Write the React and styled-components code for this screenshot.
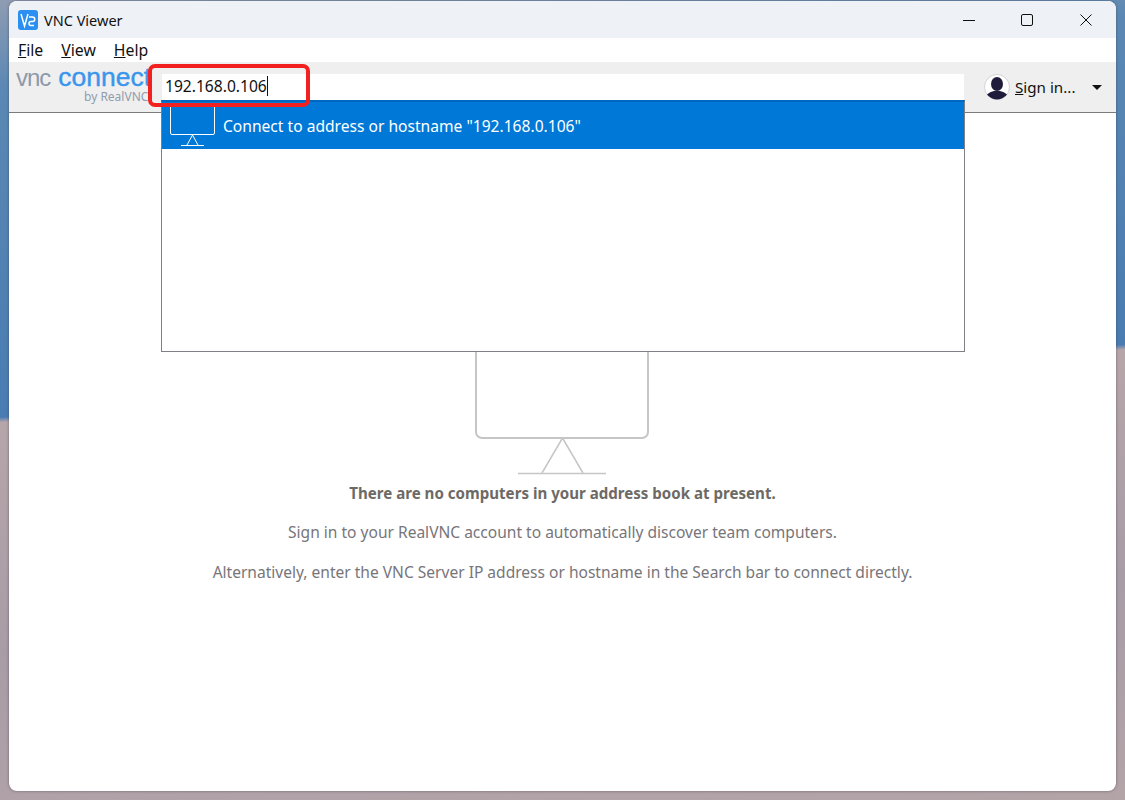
import React from 'react';
import styled, { createGlobalStyle } from 'styled-components';

const GlobalStyle = createGlobalStyle`
  html, body {
    margin: 0;
    height: 800px;
    overflow: hidden;
  }
  body {
    font-family: "Noto Sans", "Open Sans", sans-serif;
    background:
      linear-gradient(176.3deg, #8f9cb2 0%, #5b88b4 10%, #4a7cb2 47.8%, #b6a6aa 48.4%, #a89ca6 75%, #b3a4a8 100%);
  }
`;

const Desktop = styled.div`
  padding: 1px 9px 9px 9px;
  height: 800px;
  box-sizing: border-box;
`;

const Window = styled.div`
  width: 1107px;
  height: 790px;
  display: flex;
  flex-direction: column;
  background: #fff;
  border-radius: 8px;
  overflow: hidden;
  box-shadow: 0 0 3px rgba(50, 50, 60, 0.55);
`;

const TitleBar = styled.div`
  height: 37px;
  flex: none;
  display: flex;
  align-items: center;
  padding: 0 1px 0 9px;
  background: #eef2f7;
`;

const AppIcon = styled.svg`
  width: 20px;
  height: 20px;
  flex: none;
`;

const Title = styled.span`
  margin-left: 6px;
  font-size: 14.5px;
  color: #111;
  flex: 1;
`;

const WinButton = styled.div`
  width: 58px;
  height: 37px;
  display: flex;
  align-items: center;
  justify-content: center;

  &:last-child {
    margin-left: 1px;
  }
`;

const MenuBar = styled.div`
  height: 24px;
  flex: none;
  display: flex;
  align-items: center;
  gap: 18px;
  padding-left: 9px;
  background: #fff;
`;

const MenuItem = styled.span`
  font-size: 15.8px;
  color: #111;
`;

const Toolbar = styled.div`
  position: relative;
  height: 50px;
  flex: none;
  display: flex;
  align-items: flex-start;
  background: #efefef;
  border-bottom: 1px solid #7b7b7b;
`;

const Logo = styled.div`
  width: 132px;
  margin-left: 7px;
  margin-top: 3px;
  flex: none;
  display: flex;
  flex-direction: column;
`;

const LogoMark = styled.div`
  display: flex;
  align-items: baseline;
  font-family: "Liberation Sans", Arial, sans-serif;
  line-height: 25px;
  white-space: nowrap;
`;

const LogoVnc = styled.span`
  margin-right: 8px;
  font-size: 24px;
  letter-spacing: -1px;
  color: #8d99aa;
`;

const LogoConnect = styled.span`
  font-size: 26.5px;
  color: #3a96ec;
  -webkit-text-stroke: 0.4px #3a96ec;
`;

const LogoBy = styled.div`
  font-size: 12px;
  line-height: 14px;
  color: #8f9cae;
  padding-left: 68px;
  white-space: nowrap;
`;

const SearchInput = styled.div`
  width: 799px;
  height: 24px;
  margin: 12px 0 0 14px;
  padding: 0 0 2px 3px;
  flex: none;
  display: flex;
  align-items: center;
  background: #fff;
  font-size: 15.6px;
  color: #111;
`;

const Caret = styled.span`
  display: inline-block;
  width: 1px;
  height: 20px;
  background: #111;
`;

const Account = styled.div`
  margin: 11px 0 0 20px;
  display: flex;
  align-items: center;
  height: 27px;
`;

const SignIn = styled.span`
  margin-left: 5px;
  font-size: 15.2px;
  color: #111;
`;

const Arrow = styled.span`
  margin: 1px 0 0 17px;
  width: 0;
  height: 0;
  border-left: 5px solid transparent;
  border-right: 5px solid transparent;
  border-top: 5px solid #111;
`;

const Popup = styled.div`
  position: absolute;
  z-index: 2;
  left: 152px;
  top: 38px;
  width: 804px;
  height: 252px;
  box-sizing: border-box;
  background: #fff;
  border: 1px solid #7f7f86;
  border-top: 2px solid #0067c0;
`;

const PopupRow = styled.div`
  height: 47px;
  display: flex;
  align-items: center;
  padding-left: 8px;
  background: #0078d7;
  color: #fff;
  font-size: 15.6px;
`;

const RowText = styled.span`
  margin-left: 8px;
`;

const Annotation = styled.div`
  position: absolute;
  z-index: 3;
  left: 139px;
  top: 2px;
  width: 162px;
  height: 43px;
  box-sizing: border-box;
  border: 4px solid #f2201f;
  border-radius: 7px;
`;

const Content = styled.main`
  flex: 1;
  display: flex;
  flex-direction: column;
  align-items: center;
  padding-top: 200px;
`;

const Monitor = styled.svg`
  width: 176px;
  height: 162px;
  flex: none;
`;

const Heading = styled.p`
  margin: 8px 0 19px;
  font-size: 15.1px;
  line-height: 20px;
  font-weight: 700;
  color: #6d6a66;
`;

const Hint = styled.p`
  margin: 0 0 20px;
  font-size: 15.55px;
  line-height: 20px;
  color: #77757a;
`;

const Mnemonic = ({ children }) => <u>{children}</u>;

const App = () => (
  <>
    <GlobalStyle />
    <Desktop>
      <Window>
        <TitleBar>
          <AppIcon viewBox="0 0 20 20">
            <rect width="20" height="20" rx="3" fill="#2a8ff0" />
            <path d="M3 4l3.500 12L10 4" fill="none" stroke="#fff" strokeWidth="1.500" />
            <path d="M11 7h3.500a1.800 1.800 0 0 1 0 4.500H13a1.800 1.800 0 0 0 0 4h3" fill="none" stroke="#fff" strokeWidth="1.500" />
          </AppIcon>
          <Title>VNC Viewer</Title>
          <WinButton>
            <svg width="12" height="12" viewBox="0 0 12 12">
              <path d="M0 6.500h12" stroke="#111" strokeWidth="1" />
            </svg>
          </WinButton>
          <WinButton>
            <svg width="12" height="12" viewBox="0 0 12 12">
              <rect x="0.500" y="0.500" width="11" height="11" rx="1.500" fill="none" stroke="#111" strokeWidth="1" />
            </svg>
          </WinButton>
          <WinButton>
            <svg width="12" height="12" viewBox="0 0 12 12">
              <path d="M0.500 0.500l11 11M11.500 0.500l-11 11" stroke="#111" strokeWidth="1" />
            </svg>
          </WinButton>
        </TitleBar>

        <MenuBar>
          <MenuItem><Mnemonic>F</Mnemonic>ile</MenuItem>
          <MenuItem><Mnemonic>V</Mnemonic>iew</MenuItem>
          <MenuItem><Mnemonic>H</Mnemonic>elp</MenuItem>
        </MenuBar>

        <Toolbar>
          <Logo>
            <LogoMark>
              <LogoVnc>vnc</LogoVnc>
              <LogoConnect>connect</LogoConnect>
            </LogoMark>
            <LogoBy>by RealVNC</LogoBy>
          </Logo>
          <SearchInput>
            192.168.0.106
            <Caret />
          </SearchInput>
          <Account>
            <svg width="26" height="26" viewBox="0 0 26 26">
              <defs>
                <clipPath id="avatar-clip">
                  <circle cx="13" cy="13" r="12.500" />
                </clipPath>
              </defs>
              <circle cx="13" cy="13" r="12.500" fill="#fff" stroke="#c9c9cf" strokeWidth="0.800" />
              <g clipPath="url(#avatar-clip)" fill="#1e1c3a">
                <ellipse cx="13" cy="10" rx="6" ry="7" />
                <path d="M1 26c0-6 5-8 9-9h6c4 1 9 3 9 9z" />
              </g>
            </svg>
            <SignIn><Mnemonic>S</Mnemonic>ign in...</SignIn>
            <Arrow />
          </Account>

          <Popup>
            <PopupRow>
              <svg width="45" height="42" viewBox="0 0 45 42">
                <rect x="0.500" y="0.500" width="44" height="29" rx="1.500" fill="none" stroke="#fff" strokeWidth="1" />
                <path d="M22.500 30l-5.500 10M22.500 30l5.500 10M11 40.500h23" fill="none" stroke="#fff" strokeWidth="1" />
              </svg>
              <RowText>Connect to address or hostname "192.168.0.106"</RowText>
            </PopupRow>
          </Popup>
          <Annotation />
        </Toolbar>

        <Content>
          <Monitor viewBox="0 0 176 162">
            <rect x="1" y="1" width="172" height="124" rx="6" fill="none" stroke="#c6c6c8" strokeWidth="2" />
            <path d="M87.500 125L67 160M87.500 125L108 160" fill="none" stroke="#c6c6c8" strokeWidth="1.500" />
            <path d="M43 160.500h88" fill="none" stroke="#c6c6c8" strokeWidth="1.500" />
          </Monitor>
          <Heading>There are no computers in your address book at present.</Heading>
          <Hint>Sign in to your RealVNC account to automatically discover team computers.</Hint>
          <Hint>Alternatively, enter the VNC Server IP address or hostname in the Search bar to connect directly.</Hint>
        </Content>
      </Window>
    </Desktop>
  </>
);

export default App;
